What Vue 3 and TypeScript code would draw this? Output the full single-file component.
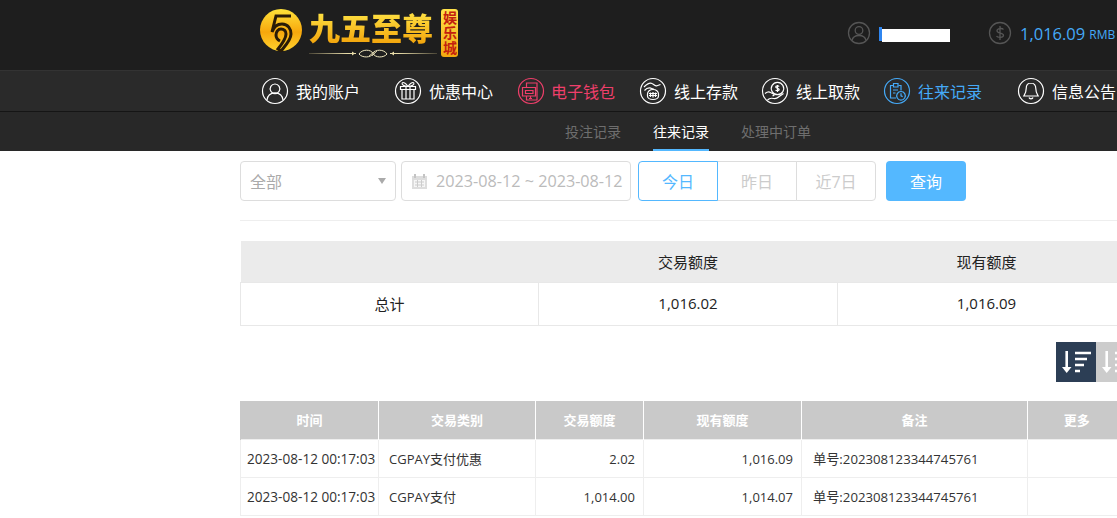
<script setup lang="ts">
type NavItem = { label: string; paths: string[]; state?: string };

const navItems: NavItem[] = [
  { label: '我的账户', paths: ['M13 6a4.800 4.800 0 1 1-.01 0Z', 'M5 22c.6-4.800 3.500-7.200 8-7.200s7.400 2.400 8 7.200'] },
  { label: '优惠中心', paths: ['M5.500 8.500h15v3h-15Z', 'M7 11.500V21h12v-9.500', 'M11 8.500V21M15 8.500V21', 'M13 8.500C11 5.500 8 3.500 7.200 5S9 8.500 13 8.500ZM13 8.500c2-3 5-5 5.800-3.500S17 8.500 13 8.500Z'] },
  { label: '电子钱包', state: 'pink', paths: ['M8.500 9V5h10.500v17H8.500v-4', 'M4.500 9.500h13v8.500h-13Z', 'M7.500 12.500h7.500v3H7.500Z', 'M12.500 18v3M11 20.500h3'] },
  { label: '线上存款', paths: ['M4 9c3-3 6-4.500 8-3.500 2 .8 3 2.800 5 2.300l3.500-1.300', 'M7.500 16a5.500 4.500 0 0 1 11 0v2a5.500 3.500 0 0 1-11 0Z', 'M9 15.500h8M9 17.500h8M10.500 14.500v4.500M13 14v5.500M15.500 14.500v4.500', 'M4.500 12.500c2-2.300 4-3 6.500-2.300l3 1'] },
  { label: '线上取款', paths: ['M15.500 4.300a6.200 6.200 0 1 1-.01 0Z', 'M15.500 7v7M17.200 8.500c-.6-.9-3.500-.9-3.500.6 0 1.600 3.500.9 3.500 2.500 0 1.400-2.900 1.400-3.600.4', 'M3 15.500c2-1.500 4-2 5.500-1l3 1.500c1.500 1 0 2-1 1.500', 'M5.500 22c2-2 4-2 6-1.500 2 .4 3.500 0 5-1.500l5-3.500'] },
  { label: '往来记录', state: 'blue', paths: ['M17 12.500V7.500h-2.500M9 7.500H6.500V20H12', 'M9.500 5.500h4.500v3.500H9.500Z', 'M9 12h5M9 15h2.500', 'M17 13.500a4.300 4.300 0 1 1-.01 0Z', 'M17 15.300v2.500l1.700.8'] },
  { label: '信息公告', paths: ['M13 5c-3.200 0-4.800 2.400-4.800 5.500 0 4-1.200 5.500-2.400 7.500h14.400c-1.200-2-2.400-3.500-2.400-7.500 0-3.100-1.600-5.500-4.800-5.500Z', 'M11 19.500c.4 1.700 3.600 1.700 4 0'] },
];

const subTabs = ['投注记录', '往来记录', '处理中订单'];
const quickDates = ['今日', '昨日', '近7日'];

const rows = [
  { time: '2023-08-12 00:17:03', type: 'CGPAY支付优惠', amount: '2.02', balance: '1,016.09', memo: '单号:202308123344745761' },
  { time: '2023-08-12 00:17:03', type: 'CGPAY支付', amount: '1,014.00', balance: '1,014.07', memo: '单号:202308123344745761' },
];
</script>

<template>
  <div class="page">
    <header class="top">
      <div class="logo">
        <svg class="logo-mark" width="44" height="44" viewBox="0 0 44 44">
          <defs>
            <linearGradient id="goldDisc" x1="0" y1="0" x2="0" y2="1">
              <stop offset="0" stop-color="#ffe23a" />
              <stop offset="0.55" stop-color="#f7a70c" />
              <stop offset="1" stop-color="#ffd22e" />
            </linearGradient>
          </defs>
          <circle cx="22" cy="22" r="21" fill="url(#goldDisc)" />
          <path d="M32 8H17L13 24C15 18 19 16 23 16C29 16 32 21 32 26C32 32 26 38 22 43L19 41C23 36 27 31 27 26C27 23 25 21 22 21C19 21 17 24 17 27C17 30 19 32 21 33" fill="none" stroke="#2a1b07" stroke-width="3" />
        </svg>
        <div class="logo-words">
          <div class="logo-name">九五至尊</div>
          <svg class="logo-line" width="128" height="10" viewBox="0 0 128 10">
            <defs>
              <linearGradient id="lineFade" gradientUnits="userSpaceOnUse" x1="0" y1="0" x2="128" y2="0">
                <stop offset="0" stop-color="#4a4536" />
                <stop offset="0.3" stop-color="#e8dca8" />
                <stop offset="0.7" stop-color="#e8dca8" />
                <stop offset="1" stop-color="#4a4536" />
              </linearGradient>
            </defs>
            <path d="M0 4.500h47M81 4.500h47" stroke="url(#lineFade)" stroke-width="1" />
            <path d="M43 2.500l3 2-3 2ZM85 2.500l-3 2 3 2Z" fill="#e8dca8" />
            <path d="M50 5c3-5 12-5 14-.5s11 4.500 14 .5c-3-5-12-5-14-.5S53 9 50 5Z" fill="none" stroke="#efe6bd" stroke-width="1" />
            <path d="M60 7l6-5M63 7l5-5" stroke="#efe6bd" stroke-width="0.800" />
          </svg>
        </div>
        <div class="logo-badge">娱乐城</div>
      </div>
      <div class="account">
        <svg class="acct-icon" width="24" height="24" viewBox="0 0 24 24">
          <circle cx="12" cy="12" r="10.500" />
          <circle cx="12" cy="9.500" r="3.800" />
          <path d="M5 19.500c.8-3.700 3.400-5 7-5s6.200 1.300 7 5" />
        </svg>
        <div class="masked"><i></i></div>
      </div>
      <div class="wallet">
        <svg class="acct-icon" width="24" height="24" viewBox="0 0 24 24">
          <circle cx="12" cy="12" r="10.500" />
          <path d="M15.500 8.500c-1-1.500-6.500-1.500-6.500 1.300 0 3 6.500 1.500 6.500 4.500 0 2.700-6 2.500-7 .7M12 5v14" />
        </svg>
        <span class="money">1,016.09</span>
        <span class="unit">RMB</span>
      </div>
    </header>

    <nav class="main-nav">
      <a v-for="item in navItems" :key="item.label" class="nav-item" :class="item.state">
        <svg width="28" height="28" viewBox="-1 -1 28 28">
          <circle cx="13" cy="13" r="12.500" />
          <path v-for="d in item.paths" :key="d" :d="d" />
        </svg>
        <span>{{ item.label }}</span>
      </a>
    </nav>

    <div class="sub-nav">
      <a v-for="tab in subTabs" :key="tab" class="sub-tab" :class="{ on: tab === '往来记录' }">{{ tab }}</a>
    </div>

    <main class="content">
      <div class="filters">
        <div class="select">
          <span>全部</span>
          <i class="caret"></i>
        </div>
        <div class="range">
          <svg width="17" height="17" viewBox="0 0 17 17">
            <path d="M1 3h15v13H1Z" fill="#ddd" />
            <path d="M4 1v4M13 1v4" stroke="#c4c4c4" stroke-width="2" />
            <path d="M3 7h11v7H3Z" fill="#f6f6f6" />
            <path d="M4 9h9M4 12h9M6.500 7v7M10.500 7v7" stroke="#ccc" stroke-width="1" />
          </svg>
          <span>2023-08-12 ~ 2023-08-12</span>
        </div>
        <div class="quick">
          <button v-for="(label, i) in quickDates" :key="label" class="quick-btn" :class="{ on: i === 0 }">{{ label }}</button>
        </div>
        <button class="search">查询</button>
      </div>

      <table class="summary">
        <colgroup>
          <col class="s1" /><col class="s2" /><col class="s3" />
        </colgroup>
        <thead>
          <tr><th></th><th>交易额度</th><th>现有额度</th></tr>
        </thead>
        <tbody>
          <tr><td>总计</td><td>1,016.02</td><td>1,016.09</td></tr>
        </tbody>
      </table>

      <div class="sorters">
        <button class="sort active">
          <svg width="30" height="26" viewBox="0 0 30 26">
            <path d="M5.700 2v17" stroke="#fff" stroke-width="2.600" />
            <path d="M1 18h9.500l-4.800 6Z" fill="#fff" />
            <path d="M14 4h16M14 10h12M14 16h9M14 22h5" stroke="#fff" stroke-width="2.500" />
          </svg>
        </button>
        <button class="sort">
          <svg width="30" height="26" viewBox="0 0 30 26">
            <path d="M5.700 2v17" stroke="#fff" stroke-width="2.600" />
            <path d="M1 18h9.500l-4.800 6Z" fill="#fff" />
            <path d="M14 4h5M14 10h9M14 16h12M14 22h16" stroke="#fff" stroke-width="2.500" />
          </svg>
        </button>
      </div>

      <table class="records">
        <colgroup>
          <col class="c1" /><col class="c2" /><col class="c3" /><col class="c4" /><col class="c5" /><col class="c6" />
        </colgroup>
        <thead>
          <tr>
            <th>时间</th><th>交易类别</th><th>交易额度</th><th>现有额度</th><th>备注</th><th>更多</th>
          </tr>
        </thead>
        <tbody>
          <tr v-for="row in rows" :key="row.type">
            <td class="time">{{ row.time }}</td>
            <td class="type">{{ row.type }}</td>
            <td class="num">{{ row.amount }}</td>
            <td class="num">{{ row.balance }}</td>
            <td class="memo">{{ row.memo }}</td>
            <td></td>
          </tr>
        </tbody>
      </table>
    </main>
  </div>
</template>

<style>
html, body {
  margin: 0;
  overflow: hidden;
  background: #fff;
}
</style>

<style scoped>
.page {
  width: 1117px;
  height: 518px;
  overflow: hidden;
  font-family: "Open Sans", "Noto Sans CJK SC", sans-serif;
  color: #333;
}

.top {
  height: 70px;
  background: #1e1e1e;
  display: flex;
  align-items: flex-start;
  box-sizing: border-box;
  padding-left: 259px;
}

.logo {
  display: flex;
  align-items: flex-start;
  width: 588px;
  padding-top: 8px;
}

.logo-mark {
  margin-right: 6px;
}

.logo-words {
  width: 132px;
}

.logo-name {
  font-family: "Noto Sans CJK SC", sans-serif;
  font-weight: 900;
  font-size: 31px;
  line-height: 37px;
  white-space: nowrap;
  background: linear-gradient(#ffe94a, #f2a20a);
  -webkit-background-clip: text;
  background-clip: text;
  color: transparent;
}

.logo-line {
  display: block;
  margin-top: 4px;
}

.logo-badge {
  width: 17px;
  height: 48px;
  margin-top: 1px;
  background: linear-gradient(#ffe24a, #f2a80f);
  border-radius: 3px;
  color: #c3200e;
  font-family: "Noto Sans CJK SC", sans-serif;
  font-weight: 700;
  font-size: 14px;
  line-height: 17px;
  text-align: center;
  writing-mode: vertical-rl;
  letter-spacing: 1px;
}

.account, .wallet {
  display: flex;
  align-items: center;
  height: 24px;
  margin-top: 21px;
}

.account {
  width: 141px;
}

.acct-icon {
  fill: none;
  stroke: #555;
  stroke-width: 1.300;
  flex: none;
}

.masked {
  width: 68px;
  height: 13px;
  margin-left: 11px;
  margin-top: 4px;
  background: #fff;
  position: relative;
}

.masked i {
  position: absolute;
  left: -3px;
  top: -2px;
  width: 3px;
  height: 14px;
  background: #2f86f0;
}

.wallet {
  white-space: nowrap;
  flex: none;
}

.money {
  margin-left: 8px;
  font-size: 16.500px;
  color: #45aaf8;
}

.unit {
  margin-left: 4px;
  margin-top: 3px;
  font-size: 12px;
  color: #45aaf8;
}

.main-nav {
  height: 40px;
  background: #2a2a2a;
  border-top: 1px solid #333;
  border-bottom: 1px solid #151515;
  display: flex;
  align-items: center;
  padding-left: 261px;
  white-space: nowrap;
}

.nav-item {
  display: flex;
  align-items: center;
  gap: 7px;
  font-size: 16px;
  color: #fff;
  width: 122px;
  flex: none;
}

.nav-item:nth-child(1) {
  width: 133px;
}

.nav-item:nth-child(2) {
  width: 123px;
}

.nav-item:nth-child(3) {
  gap: 6px;
}

.nav-item:nth-child(6) {
  width: 134px;
}

.nav-item span {
  margin-bottom: 1px;
}

.nav-item svg {
  flex: none;
  fill: none;
  stroke: currentColor;
  stroke-width: 1.200;
}

.nav-item.pink {
  color: #ee3f6a;
}

.nav-item.blue {
  color: #45aaf8;
}

.sub-nav {
  height: 39px;
  background: #282828;
  display: flex;
  gap: 32px;
  padding-left: 565px;
}

.sub-tab {
  font-size: 14px;
  line-height: 40px;
  height: 39px;
  box-sizing: border-box;
  color: #6e6e6e;
}

.sub-tab.on {
  color: #fff;
  border-bottom: 2px solid #54b8ff;
}

.content {
  width: 897px;
  margin-left: 240px;
  padding-top: 10px;
}

.filters {
  display: flex;
  align-items: stretch;
  height: 40px;
  padding-bottom: 19px;
  border-bottom: 1px solid #eee;
  font-size: 16px;
}

.select, .range {
  box-sizing: border-box;
  border: 1px solid #ddd;
  border-radius: 4px;
  display: flex;
  align-items: center;
  color: #aaa;
}

.select {
  width: 156px;
  padding: 0 9px 1px;
  justify-content: space-between;
}

.caret {
  width: 0;
  height: 0;
  border-left: 4px solid transparent;
  border-right: 4px solid transparent;
  border-top: 6px solid #aaa;
}

.range {
  width: 230px;
  margin-left: 5px;
  padding-left: 9px;
  gap: 8px;
  color: #bbb;
  white-space: nowrap;
  font-size: 16.200px;
}

.quick {
  display: flex;
  margin-left: 7px;
}

.quick-btn {
  box-sizing: border-box;
  width: 80px;
  height: 40px;
  margin-left: -1px;
  padding: 0;
  border: 1px solid #ddd;
  background: #fff;
  color: #ccc;
  font: inherit;
}

.quick-btn:first-child {
  margin-left: 0;
  border-radius: 4px 0 0 4px;
  position: relative;
}

.quick-btn:last-child {
  border-radius: 0 4px 4px 0;
}

.quick-btn.on {
  border-color: #54b8ff;
  color: #54b8ff;
}

.search {
  width: 80px;
  margin-left: 10px;
  padding: 0;
  border: 0;
  border-radius: 4px;
  background: #54b8ff;
  color: #fff;
  font: inherit;
}

table {
  border-collapse: collapse;
  table-layout: fixed;
}

th, td {
  box-sizing: border-box;
}

.summary {
  width: 897px;
  margin-top: 20px;
  font-size: 15px;
  color: #222;
}

.s1 { width: 298px; }
.s2 { width: 299px; }
.s3 { width: 300px; }

.summary th {
  height: 41px;
  padding: 0;
  background: #ebebeb;
  font-weight: 400;
}

.summary td {
  height: 43px;
  padding: 0 0 1px;
  text-align: center;
  border: 1px solid #e8e8e8;
}

.summary th:nth-child(3),
.summary td:nth-child(3) {
  padding-right: 2px;
}

.sorters {
  display: flex;
  justify-content: flex-end;
  margin-top: 16px;
  margin-right: 1px;
}

.sort {
  width: 40px;
  height: 40px;
  padding: 0;
  border: 0;
  background: #ccc;
  display: flex;
  align-items: center;
  justify-content: center;
}

.sort.active {
  background: #2c3e55;
}

.records {
  width: 885px;
  margin-top: 19px;
  font-size: 13px;
  color: #333;
}

.c1 { width: 138px; }
.c2 { width: 157px; }
.c3 { width: 108px; }
.c4 { width: 158px; }
.c5 { width: 226px; }
.c6 { width: 98px; }

.records th {
  height: 39px;
  padding: 0;
  background: #c9c9c9;
  color: #fff;
  font-weight: 700;
  border-left: 1px solid #fff;
}

.records th:first-child {
  border-left: 1px solid #c9c9c9;
}

.records td {
  height: 38px;
  padding: 0;
  border: 1px solid #eee;
  white-space: nowrap;
}

.time {
  padding-left: 6px !important;
  font-size: 13.600px;
}

.type {
  padding-left: 10px !important;
}

.num {
  text-align: right;
  padding-right: 8px !important;
}

.memo {
  padding-left: 11px !important;
  font-size: 13.200px;
}
</style>
